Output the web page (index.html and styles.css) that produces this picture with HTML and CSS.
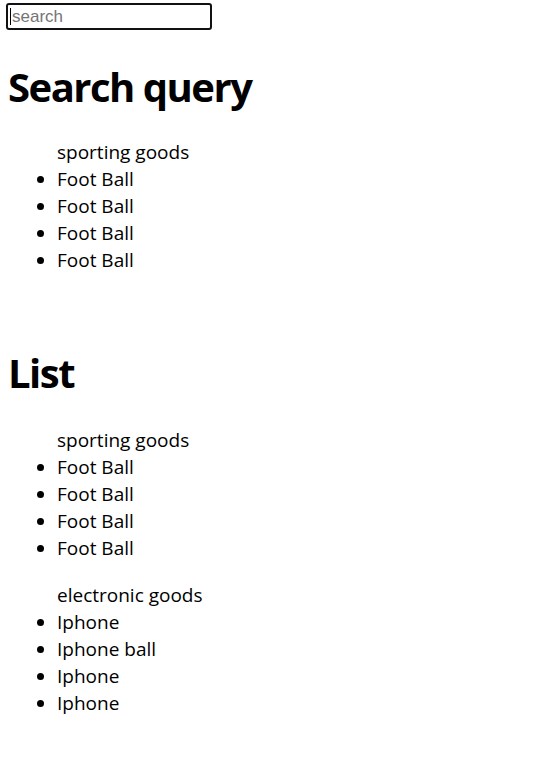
FILE: index.html
```html
<!DOCTYPE html>
<html>
<head>
<meta charset="utf-8">
<link rel="stylesheet" href="styles.css">
</head>
<body>
<div class="search">
  <input class="search-input" type="text" placeholder="search">
  <span class="caret"></span>
</div>
<section class="block block-query">
  <h1 class="title">Search query</h1>
  <ul class="group">
    <li class="category">sporting goods</li>
    <li>Foot Ball</li>
    <li>Foot Ball</li>
    <li>Foot Ball</li>
    <li>Foot Ball</li>
  </ul>
</section>
<section class="block block-list">
  <h1 class="title">List</h1>
  <ul class="group">
    <li class="category">sporting goods</li>
    <li>Foot Ball</li>
    <li>Foot Ball</li>
    <li>Foot Ball</li>
    <li>Foot Ball</li>
  </ul>
  <ul class="group">
    <li class="category">electronic goods</li>
    <li>Iphone</li>
    <li>Iphone ball</li>
    <li>Iphone</li>
    <li>Iphone</li>
  </ul>
</section>
</body>
</html>
```

FILE: styles.css
```css
html, body {
  margin: 0;
  background: #fff;
  color: #000;
}
body {
  padding: 3px 8px 0 8px;
  font-family: "Open Sans", "Noto Sans", sans-serif;
  font-size: 19px;
}
.search {
  position: relative;
  display: inline-block;
  margin-left: -2px;
  vertical-align: top;
}
.search-input {
  display: block;
  box-sizing: border-box;
  width: 206px;
  height: 27px;
  margin: 0;
  padding: 0 0 0 4px;
  border: 2px solid #111;
  border-radius: 3px;
  outline: none;
  font-family: "Liberation Sans", Arial, sans-serif;
  font-size: 17px;
  color: #000;
  background: #fff;
}
.search-input::placeholder {
  color: #757575;
}
.caret {
  position: absolute;
  left: 4px;
  top: 5px;
  width: 1px;
  height: 17px;
  background: #000;
}
.title {
  margin: 0;
  font-size: 40px;
  line-height: 53px;
  font-weight: 700;
  letter-spacing: -1.5px;
}
.block-query .title {
  margin-top: 30px;
  margin-bottom: 26px;
}
.block-list {
  margin-top: 72px;
}
.block-list .title {
  margin-bottom: 28px;
}
.group {
  margin: 0;
  padding-left: 49px;
  line-height: 27px;
}
.group + .group {
  margin-top: 20px;
}
.category {
  list-style: none;
}
```
